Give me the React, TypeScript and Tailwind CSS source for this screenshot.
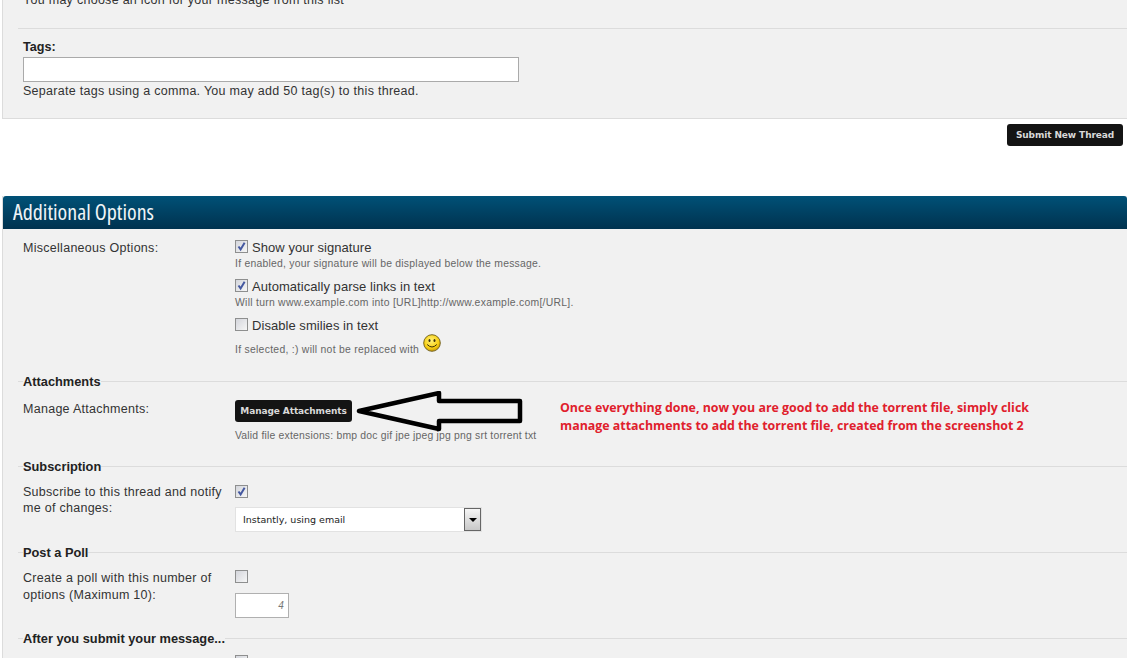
import React from 'react'

const Checkbox = ({ checked }: { checked?: boolean }) => (
  <div className="w-[13px] h-[13px] shrink-0 border border-[#8e8f8f] bg-gradient-to-br from-[#d4d6dc] to-[#f6f6f6] p-px">
    {checked && (
      <svg viewBox="0 0 11 11" className="w-[11px] h-[11px] -ml-px -mt-px">
        <path d="M2.5 5.5 L4.6 8.4 L8.6 1.8" fill="none" stroke="#4458a0" strokeWidth="2" />
      </svg>
    )}
  </div>
)

const SectionTitle = ({ title }: { title: string }) => (
  <div className="flex items-center h-[16px] pl-[15px] text-[12.8px] tracking-normal font-bold text-[#222]">
    <div className="w-[5px] h-px bg-[#dcdcdc]" />
    <span className="whitespace-nowrap pt-[2px]">{title}</span>
    <div className="flex-1 h-px bg-[#dcdcdc]" />
  </div>
)

const Smiley = () => (
  <svg viewBox="0 0 18 18" className="w-[18px] h-[18px] shrink-0 ml-[4px]">
    <defs>
      <radialGradient id="face" cx="45%" cy="35%" r="65%">
        <stop offset="0%" stopColor="#fff27a" />
        <stop offset="70%" stopColor="#f7ce12" />
        <stop offset="100%" stopColor="#c99a06" />
      </radialGradient>
    </defs>
    <circle cx="9" cy="9" r="8.3" fill="url(#face)" stroke="#6b5a14" strokeWidth="0.9" />
    <ellipse cx="6.5" cy="6.5" rx="1" ry="1.6" fill="#3a2d08" />
    <ellipse cx="11.5" cy="6.5" rx="1" ry="1.6" fill="#3a2d08" />
    <path d="M4.2 10.5 Q9 15.5 13.8 10.5" fill="none" stroke="#3a2d08" strokeWidth="1" />
  </svg>
)

const DarkButton = ({ label, className }: { label: string; className: string }) => (
  <div
    className={`flex items-center justify-center pt-[2px] rounded-[3px] bg-[#141414] text-[#d9d9d9] font-bold text-[9px] tracking-[-0.1px] font-['DejaVu_Sans',sans-serif] whitespace-nowrap ${className}`}
  >
    {label}
  </div>
)

const OptionRow = ({ checked, label, className }: { checked?: boolean; label: string; className: string }) => (
  <div className={`flex items-center gap-[4px] h-[14px] text-[13px] tracking-[0.05px] ${className}`}>
    <Checkbox checked={checked} />
    <span className="pt-[3px]">{label}</span>
  </div>
)

export default function App() {
  return (
    <div className="w-[1127px] h-[658px] overflow-hidden bg-white font-['Liberation_Sans',Arial,sans-serif] text-[12.5px] tracking-[0.28px] text-[#333]">
      {/* Top panel, cut off by the top of the screenshot */}
      <div className="flex flex-col ml-[2px] h-[119px] border-l border-b border-[#dcdcdc] bg-[#f1f1f1]">
        <div className="pl-[20px] -mt-[7px] h-[35px] leading-[14px]">You may choose an icon for your message from this list</div>
        <div className="ml-[15px] h-px bg-[#dcdcdc]" />
        <div className="pl-[20px] pt-[11px]">
          <div className="font-bold text-[12.6px] tracking-normal leading-[15px] text-[#222]">Tags:</div>
          <div className="w-[496px] h-[25px] mt-[2px] border border-[#aaa] bg-white" />
          <div className="mt-px leading-[16px]">Separate tags using a comma. You may add 50 tag(s) to this thread.</div>
        </div>
      </div>

      <div className="flex justify-end pr-[4px] pt-[5px] h-[77px]">
        <DarkButton label="Submit New Thread" className="w-[116px] h-[22px]" />
      </div>

      {/* Additional options */}
      <div className="ml-[2px] h-[462px] border-l border-[#dcdcdc] bg-[#f1f1f1]">
        <div className="h-[33px] rounded-t-[3px] bg-gradient-to-b from-[#005177] to-[#00324f] pl-[10px] text-[#eef4f7] text-[22px] leading-[30px] tracking-normal [font-stretch:81%] font-['Open_Sans',sans-serif]">
          Additional Options
        </div>

        <div className="flex pl-[20px] pt-[12px] h-[144px]">
          <div className="w-[212px] leading-[14px]">Miscellaneous Options:</div>
          <div className="flex flex-col -mt-[2px]">
            <OptionRow checked label="Show your signature" className="" />
            <div className="text-[10.4px] tracking-[0.24px] leading-[14px] mt-[4px] text-[#666]">If enabled, your signature will be displayed below the message.</div>
            <OptionRow checked label="Automatically parse links in text" className="mt-[7px]" />
            <div className="text-[10.4px] tracking-[0.27px] leading-[14px] mt-[4px] text-[#666]">Will turn www.example.com into [URL]http://www.example.com[/URL].</div>
            <OptionRow label="Disable smilies in text" className="mt-[7px]" />
            <div className="flex items-center text-[10.4px] h-[18px] mt-[3px] text-[#666]">
              <span className="mt-[14px]">If selected, :) will not be replaced with</span>
              <Smiley />
            </div>
          </div>
        </div>

        <SectionTitle title="Attachments" />
        <div className="relative flex pl-[20px] pt-[13px] h-[69px]">
          <div className="w-[212px] leading-[14px]">Manage Attachments:</div>
          <div className="flex flex-col">
            <DarkButton label="Manage Attachments" className="w-[117px] h-[22px] -mt-[2px]" />
            <div className="text-[10.4px] tracking-[0.2px] leading-[14px] mt-[7px] text-[#666] whitespace-nowrap">Valid file extensions: bmp doc gif jpe jpeg jpg png srt torrent txt</div>
          </div>
          {/* Hand-drawn arrow pasted over the screenshot */}
          <svg viewBox="0 0 170 44" className="absolute left-[351px] top-[2px] w-[170px] h-[44px]">
            <path d="M5 20 L85 2 L85 10 L166 10 L166 30 L85 30 L85 38 Z" fill="none" stroke="#000" strokeWidth="4.5" strokeLinejoin="round" />
          </svg>
          <div className="absolute left-[557px] top-[10px] w-[520px] text-[12.4px] leading-[18px] font-bold tracking-normal text-[#e0202c] font-['Open_Sans',sans-serif]">
            Once everything done, now you are good to add the torrent file, simply click
            <br />
            manage attachments to add the torrent file, created from the screenshot 2
          </div>
        </div>

        <SectionTitle title="Subscription" />
        <div className="flex pl-[20px] pt-[11px] h-[70px]">
          <div className="w-[212px] leading-[16px] -mt-px">
            Subscribe to this thread and notify
            <br />
            me of changes:
          </div>
          <div className="flex flex-col">
            <Checkbox checked />
            <div className="flex items-center justify-between w-[247px] h-[25px] mt-[9px] pl-[7px] bg-white border border-[#e2e2e2] tracking-normal text-[#222] font-['DejaVu_Sans',sans-serif]">
              <span className="text-[9.5px] pt-px">Instantly, using email</span>
              <div className="flex items-center justify-center w-[17px] h-[23px] border border-[#666] bg-gradient-to-b from-[#f6f6f6] to-[#c8c8c8]">
                <div className="w-0 h-0 border-l-[4px] border-r-[4px] border-t-[4px] border-l-transparent border-r-transparent border-t-black" />
              </div>
            </div>
          </div>
        </div>

        <SectionTitle title="Post a Poll" />
        <div className="flex pl-[20px] pt-[10px] h-[70px]">
          <div className="w-[212px] leading-[17px]">
            Create a poll with this number of
            <br />
            options (Maximum 10):
          </div>
          <div className="flex flex-col">
            <Checkbox />
            <div className="w-[54px] h-[25px] mt-[10px] border border-[#b0b0b0] bg-white pr-[4px] text-right text-[10px] leading-[23px] italic text-[#777]">4</div>
          </div>
        </div>

        <SectionTitle title="After you submit your message..." />
        <div className="pl-[232px] pt-[9px]">
          <Checkbox />
        </div>
      </div>
    </div>
  )
}
